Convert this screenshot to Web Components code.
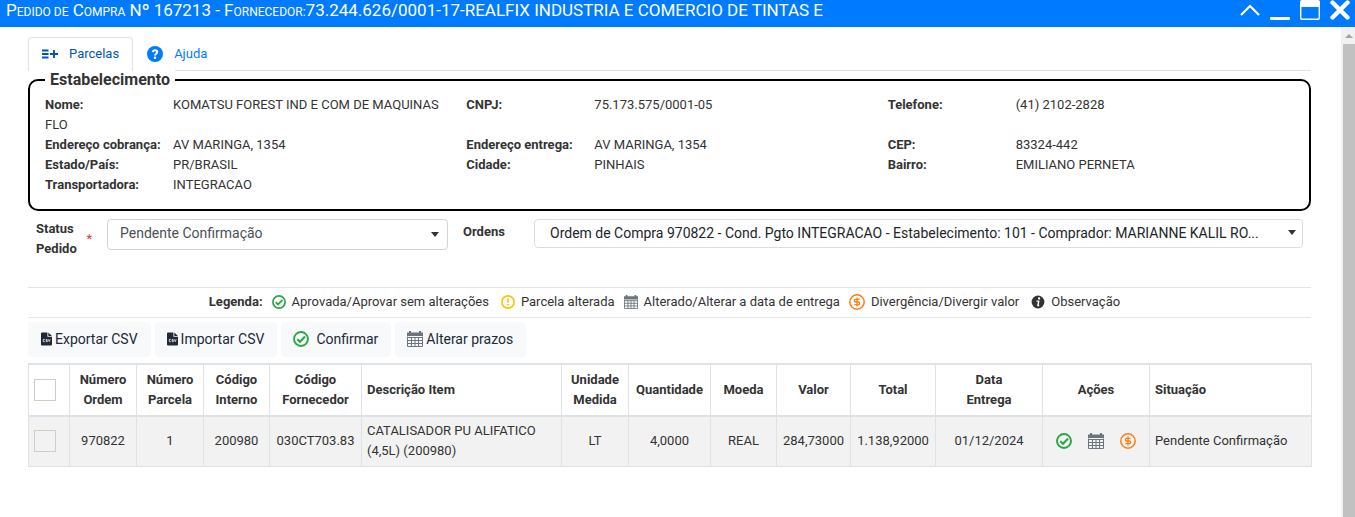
<!DOCTYPE html>
<html lang="pt-BR">
<head>
<meta charset="utf-8">
<title>Pedido de Compra Nº 167213</title>
<style>
  html, body { margin: 0; }
  body { font: 13px/20px Roboto, "Liberation Sans", sans-serif; color: #333; background: #fff; }
</style>
</head>
<body>
<order-window>
  <window-bar slot="bar">P<small>edido de</small> C<small>ompra</small> Nº 167213 - F<small>ornecedor:</small>73.244.626/0001-17-REALFIX INDUSTRIA E COMERCIO DE TINTAS E</window-bar>
  <tab-nav></tab-nav>
  <field-group heading="Estabelecimento">
    <info-field label="Nome:">KOMATSU FOREST IND E COM DE MAQUINAS <span>FLO</span></info-field>
    <info-field label="CNPJ:">75.173.575/0001-05</info-field>
    <info-field label="Telefone:">(41) 2102-2828</info-field>
    <info-field label="Endereço cobrança:">AV MARINGA, 1354</info-field>
    <info-field label="Endereço entrega:">AV MARINGA, 1354</info-field>
    <info-field label="CEP:">83324-442</info-field>
    <info-field label="Estado/País:">PR/BRASIL</info-field>
    <info-field label="Cidade:">PINHAIS</info-field>
    <info-field label="Bairro:">EMILIANO PERNETA</info-field>
    <info-field label="Transportadora:">INTEGRACAO</info-field>
  </field-group>
  <order-filters></order-filters>
  <status-legend></status-legend>
  <action-toolbar></action-toolbar>
  <parcel-table></parcel-table>
</order-window>

<script>
const icons = {
  up: ['0 0 20 20', '<path d="M1 15 10 6l9 9" fill="none" stroke="currentColor" stroke-width="2.2"/>'],
  minimize: ['0 0 20 20', '<rect y="17" width="20" height="3" rx="1" fill="currentColor"/>'],
  maximize: ['0 0 20 20', '<path fill-rule="evenodd" fill="currentColor" d="M2 0h16a2 2 0 0 1 2 2v16a2 2 0 0 1-2 2H2a2 2 0 0 1-2-2V2a2 2 0 0 1 2-2zm-.6 7v10.600a1 1 0 0 0 1 1h15.200a1 1 0 0 0 1-1V7z"/>'],
  close: ['0 0 20 20', '<path d="M2.500 2.500l15 15M17.500 2.500l-15 15" stroke="currentColor" stroke-width="4.400" stroke-linecap="round"/>'],
  listAdd: ['0 0 16 16', '<path d="M0 4.500h6.500M0 8h6.500M0 11.500h6.500M8 8h8M12 4v8" stroke="currentColor" stroke-width="1.900" fill="none"/>'],
  help: ['0 0 16 16', '<circle cx="8" cy="8" r="8" fill="currentColor"/><path d="M5.700 6.200C5.900 4.800 6.800 4.200 8 4.200c1.400 0 2.300.8 2.300 1.900C10.300 7.700 8 7.700 8 9.400" stroke="#fff" stroke-width="1.900" fill="none"/><circle cx="8" cy="11.700" r="1.200" fill="#fff"/>'],
  check: ['0 0 16 16', '<circle cx="8" cy="8" r="7" fill="none" stroke="currentColor" stroke-width="1.900"/><path d="M4.300 8.200 7 10.800 12 5.500" fill="none" stroke="currentColor" stroke-width="2"/>'],
  alert: ['0 0 16 16', '<circle cx="8" cy="8" r="7" fill="none" stroke="currentColor" stroke-width="1.900"/><path d="M8 4v4.800M8 10.200v1.900" stroke="currentColor" stroke-width="1.900"/>'],
  calendar: ['0 0 16 16', '<path fill="currentColor" d="M0 1.500h2V0h2v1.500h8V0h2v1.500h2V5H0z"/><path d="M.5 5.500v10h15v-10M0 6.500h16M0 9.500h16M0 12.500h16M4.500 6v10M8 6v10M11.500 6v10" stroke="currentColor" fill="none"/>'],
  money: ['0 0 16 16', '<circle cx="8" cy="8" r="7.200" fill="none" stroke="currentColor" stroke-width="1.500"/><path d="M10.500 5.400H6.400a.9.900 0 0 0-.9.900v.8a.9.900 0 0 0 .9.900h3.200a.9.900 0 0 1 .9.900v.8a.9.900 0 0 1-.9.900H5.500M8 3.600v8.800" fill="none" stroke="currentColor" stroke-width="1.300"/>'],
  info: ['0 0 16 16', '<circle cx="8" cy="8" r="7.300" fill="currentColor"/><path d="M9 6.500 7.900 11.900M6.300 7h2.600M7 12h2.400" stroke="#fff" stroke-width="1.600" fill="none"/><circle cx="9.300" cy="4" r="1.300" fill="#fff"/>'],
  csv: ['0 0 12 14', '<path fill="currentColor" d="M1 0h6v4.500h5V13a1 1 0 0 1-1 1H1a1 1 0 0 1-1-1V1a1 1 0 0 1 1-1zM8 0l4 3.700H8z"/><path d="M4.200 7.500H2.500v2.400h1.700M7 7.500H5.500v1.200H7v1.200H5.200M8 7.300l1 2.600 1-2.600" stroke="#fff" stroke-width=".8" fill="none"/>'],
};

const define = (name, html, setup) => {
  const template = document.createElement('template');
  template.innerHTML = '<style>:host{display:block}*{box-sizing:border-box}</style>' + html;
  customElements.define(name, class extends HTMLElement {
    constructor() {
      super();
      this.attachShadow({ mode: 'open' }).append(template.content.cloneNode(true));
    }
    connectedCallback() { if (setup) setup(this, this.shadowRoot); }
  });
};

define('ui-icon', `
  <style>
    :host { display: inline-block; flex: none; width: var(--size, 16px); height: var(--size, 16px); }
    svg { display: block; width: 100%; height: 100%; }
  </style><svg aria-hidden="true"></svg>`, (el, root) => {
  const [box, shapes] = icons[el.getAttribute('name')];
  const svg = root.querySelector('svg');
  svg.setAttribute('viewBox', box);
  svg.innerHTML = shapes;
});

define('order-window', `
  <style>
    :host { display: flex; flex-direction: column; height: 100vh; }
    .view { flex: 1; min-height: 0; display: flex; }
    main { flex: 1; min-width: 0; padding: 10px 30px 0 28px; overflow: hidden; }
    .scroll { width: 14px; background: #f1f1f1; display: flex; flex-direction: column; align-items: flex-end; }
    .scroll svg { width: 12px; height: 17px; display: block; flex: none; }
    .thumb { width: 12px; flex: 1; background: #c1c1c1; }
  </style>
  <slot name="bar"></slot>
  <div class="view">
    <main><slot></slot></main>
    <div class="scroll" aria-hidden="true">
      <svg viewBox="0 0 12 17"><path d="M2 11h8L6 7z" fill="#a3a3a3"/></svg>
      <div class="thumb"></div>
    </div>
  </div>`);

define('window-bar', `
  <style>
    header { display: flex; justify-content: space-between; height: 27px; padding: 0 5px 0 6px; background: #007bff; color: #fff; }
    h1 { margin: 0; font-size: 17px; line-height: 21px; font-weight: 400; white-space: nowrap; overflow: hidden; }
    ::slotted(small) { font-size: 12px; text-transform: uppercase; }
    nav { display: flex; gap: 10px; }
    button { all: unset; height: 20px; --size: 20px; }
  </style>
  <header>
    <h1><slot></slot></h1>
    <nav>
      <button aria-label="Recolher"><ui-icon name="up"></ui-icon></button>
      <button aria-label="Minimizar"><ui-icon name="minimize"></ui-icon></button>
      <button aria-label="Maximizar"><ui-icon name="maximize"></ui-icon></button>
      <button aria-label="Fechar"><ui-icon name="close"></ui-icon></button>
    </nav>
  </header>`);

define('tab-nav', `
  <style>
    nav { display: flex; height: 34px; border-bottom: 1px solid #dee2e6; }
    a { display: flex; align-items: center; gap: 11px; height: 34px; padding: 0 13px 2px; border: 1px solid transparent; border-bottom: 0; border-radius: 4px 4px 0 0; color: #007bff; text-decoration: none; }
    a.on { color: #0056b3; background: #fff; border-color: #dee2e6; }
  </style>
  <nav>
    <a class="on" href="#parcelas"><ui-icon name="listAdd"></ui-icon>Parcelas</a>
    <a href="#ajuda"><ui-icon name="help"></ui-icon>Ajuda</a>
  </nav>`);

define('field-group', `
  <style>
    :host { margin-top: -2px; }
    fieldset { margin: 0; min-width: 0; padding: 4px 0 14px 15px; border: 2px solid #000; border-radius: 10px; }
    legend { padding: 0 5px; background: #fff; font-size: 16px; line-height: 22px; font-weight: 700; }
    .grid { display: grid; grid-template-columns: repeat(3, minmax(0, 1fr)); }
  </style>
  <fieldset><legend></legend><div class="grid"><slot></slot></div></fieldset>`, (el, root) => {
  root.querySelector('legend').textContent = el.getAttribute('heading');
});

define('info-field', `
  <style>:host { padding-right: 15px; } b { display: inline-block; width: 128px; }</style><b></b><slot></slot>`, (el, root) => {
  root.querySelector('b').textContent = el.getAttribute('label');
});

define('order-filters', `
  <style>
    form { display: flex; align-items: flex-start; padding: 8px 8px 0; }
    label { font-weight: 700; }
    .status { display: flex; align-items: center; justify-content: space-between; width: 56px; margin-right: 15px; }
    .status span { width: 44px; }
    i { font-style: normal; font-weight: 400; color: #dc3545; }
    .order { width: 71px; margin-left: 15px; padding-top: 3px; }
    select { appearance: none; height: 31px; margin: 0; padding: 0 30px 3px 12px; border: 1px solid #ced4da; border-radius: 4px; font: 14px Roboto, "Liberation Sans", sans-serif; color: #495057; text-overflow: ellipsis; width: 100%;
      background: #fff url('data:image/svg+xml,<svg xmlns="http://www.w3.org/2000/svg" width="8" height="5"><path d="M0 0h8L4 5z" fill="%23333"/></svg>') no-repeat right 8px center; }
    #ordens { height: 29px; padding: 0 26px 1px 15px; border-color: #ddd; color: #212529; background-position: right 6px top 10px; }
    .a { flex: 341 1 0; min-width: 0; } .b { flex: 769 1 0; min-width: 0; }
  </style>
  <form>
    <label class="status" for="status"><span>Status Pedido</span><i>*</i></label>
    <div class="a"><select id="status"><option>Pendente Confirmação</option></select></div>
    <label class="order" for="ordens">Ordens</label>
    <div class="b"><select id="ordens"><option>Ordem de Compra 970822 - Cond. Pgto INTEGRACAO - Estabelecimento: 101 - Comprador: MARIANNE KALIL RO...</option></select></div>
  </form>`);

define('status-legend', `
  <style>
    :host { margin-top: 28px; }
    div { display: flex; justify-content: center; align-items: center; gap: 9px; height: 31px; padding: 0 10px 2px 0; border: solid #e5e5e5; border-width: 1px 0; --size: 14px; }
    span { display: flex; align-items: center; gap: 6px; }
    .round { padding-left: 3px; }
  </style>
  <div>
    <b>Legenda:</b>
    <span><ui-icon name="check" style="color:#28a745"></ui-icon>Aprovada/Aprovar sem alterações</span>
    <span class="round"><ui-icon name="alert" style="color:#ffc107"></ui-icon>Parcela alterada</span>
    <span><ui-icon name="calendar" style="color:#6c757d"></ui-icon>Alterado/Alterar a data de entrega</span>
    <span style="--size:16px"><ui-icon name="money" style="color:#fd7e14"></ui-icon>Divergência/Divergir valor</span>
    <span class="round"><ui-icon name="info"></ui-icon>Observação</span>
  </div>`);

define('action-toolbar', `
  <style>
    div { display: flex; gap: 4px; padding: 4px 0 6px; }
    button { display: flex; align-items: center; gap: 3px; height: 35px; margin: 0; padding: 0 13px 1px 13px; border: 0; border-radius: 4px; background: #f8f9fa; color: #212936; font: 14px/20px Roboto, "Liberation Sans", sans-serif; }
    button + button { padding-left: 12px; }
    .wide { gap: 7px; }
  </style>
  <div>
    <button style="--size:14px"><ui-icon name="csv" style="width:11px"></ui-icon>Exportar CSV</button>
    <button style="--size:14px"><ui-icon name="csv" style="width:11px"></ui-icon>Importar CSV</button>
    <button class="wide"><ui-icon name="check" style="color:#28a745"></ui-icon>Confirmar</button>
    <button><ui-icon name="calendar" style="color:#6c757d"></ui-icon>Alterar prazos</button>
  </div>`);

define('parcel-table', `
  <style>
    table { width: 100%; table-layout: fixed; border-collapse: collapse; }
    th, td { padding: 5px; border: 1px solid #dee2e6; text-align: center; vertical-align: middle; }
    th { border-top-width: 2px; border-bottom-width: 2px; font-weight: 700; }
    td { height: 50px; background: #f2f2f2; white-space: nowrap; padding: 4px 0; }
    .l { text-align: left; }
    td.l { white-space: normal; padding-inline: 5px; }
    input { appearance: none; display: block; width: 22px; height: 22px; margin: 0; border: 1px solid #d1ccc6; }
    .acts { display: flex; justify-content: center; gap: 16px; }
    .acts button { all: unset; height: 16px; }
  </style>
  <table>
    <colgroup></colgroup>
    <thead><tr>
      <th class="l"><input type="checkbox" aria-label="Selecionar todos"></th>
      <th>Número Ordem</th><th>Número Parcela</th><th>Código Interno</th><th>Código Fornecedor</th>
      <th class="l">Descrição Item</th><th>Unidade Medida</th><th>Quantidade</th><th>Moeda</th><th>Valor</th><th>Total</th>
      <th>Data<br>Entrega</th><th>Ações</th><th class="l">Situação</th>
    </tr></thead>
    <tbody><tr>
      <td class="l"><input type="checkbox" aria-label="Selecionar parcela 1"></td>
      <td>970822</td><td>1</td><td>200980</td><td>030CT703.83</td>
      <td class="l">CATALISADOR PU ALIFATICO (4,5L) (200980)</td><td>LT</td><td>4,0000</td><td>REAL</td><td>284,73000</td><td>1.138,92000</td>
      <td>01/12/2024</td>
      <td><div class="acts">
        <button aria-label="Aprovar" style="color:#28a745"><ui-icon name="check"></ui-icon></button>
        <button aria-label="Alterar data" style="color:#6c757d"><ui-icon name="calendar"></ui-icon></button>
        <button aria-label="Divergir valor" style="color:#fd7e14"><ui-icon name="money"></ui-icon></button>
      </div></td>
      <td class="l">Pendente Confirmação</td>
    </tr></tbody>
  </table>`, (el, root) => {
  const widths = [41, 67, 67, 66, 92, 200, 67, 82, 66, 74, 85, 107, 107, 162];
  root.querySelector('colgroup').innerHTML = widths.map(w => `<col style="width:${w}px">`).join('');
});
</script>
</body>
</html>
